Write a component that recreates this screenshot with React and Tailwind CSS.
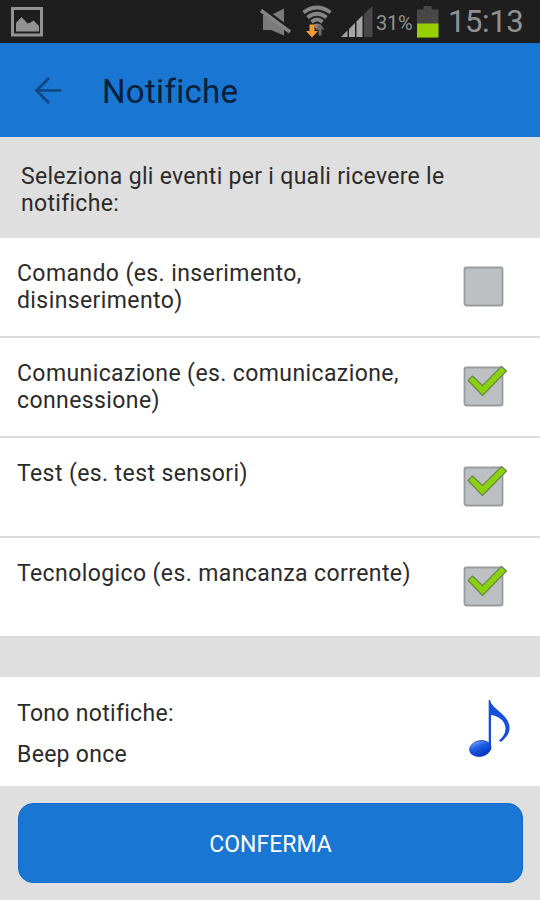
import React from "react";

const events = [
  { id: "comando", lines: ["Comando (es. inserimento,", "disinserimento)"], checked: false },
  { id: "comunicazione", lines: ["Comunicazione (es. comunicazione,", "connessione)"], checked: true },
  { id: "test", lines: ["Test (es. test sensori)"], checked: true },
  { id: "tecnologico", lines: ["Tecnologico (es. mancanza corrente)"], checked: true },
];

const StatusBar = () => (
  <div className="h-[43px] shrink-0 bg-[#1e1e1e] flex items-center text-[#929292]">
    <svg width="34" height="30" viewBox="0 0 34 30" className="ml-[11px]">
      <rect x="1.500" y="1.500" width="29" height="26.500" fill="none" stroke="#929292" strokeWidth="3" />
      <path d="M5 24.500V16l5.500-6 6 6.500 3-1 3-2 5.500 5.500v5.500z" fill="#929292" />
    </svg>
    {/* Muted speaker */}
    <svg width="32" height="30" viewBox="0 0 32 30" className="ml-[215px]">
      <path d="M3 8h8L24 1.500v27L11 23H3z" fill="#7b7b7b" />
      <path d="M2 2.500L31 24" stroke="#1e1e1e" strokeWidth="5.500" />
      <path d="M1 3.500L30 25" stroke="#858585" strokeWidth="3.600" />
    </svg>
    {/* Wifi with traffic arrows */}
    <svg width="30" height="34" viewBox="0 0 30 34" className="ml-[10px]">
      <g fill="none" stroke="#858585" strokeWidth="3.800">
        <path d="M1.500 7.500Q15 -2.500 28.500 7.500" />
        <path d="M5.500 12.500Q15 5 24.500 12.500" />
        <path d="M9.500 17Q15 12 20.500 17" />
      </g>
      <path d="M11 20Q15 17 19 20L15 25z" fill="#858585" />
      <path d="M18 18.500l4.500 6h-3v6h-3v-6h-3z" fill="#6b6b6b" />
      <path d="M7.500 19.500h5v6.500h3.500L10 32.500l-6-6.500h3.500z" fill="#f59a32" />
    </svg>
    {/* Signal */}
    <svg width="32" height="32" viewBox="0 0 32 32" className="ml-[9px]">
      <path d="M0 31l6.500-6.500V31z" fill="#a5a5a5" />
      <path d="M8 31v-8l6-6V31z" fill="#a5a5a5" />
      <path d="M15.500 31V15.500l6-6V31z" fill="#a5a5a5" />
      <path d="M23 31V8l8.500-8V31z" fill="#484848" />
    </svg>
    <span className="ml-[3px] mt-0.5 w-[37px] text-[20px] leading-none whitespace-nowrap tracking-[-0.2px]">31%</span>
    <svg width="22" height="32" viewBox="0 0 22 32" className="ml-[4px]">
      <path d="M6.500 0h8v3.500h7v28H0v-28h6.500z" fill="#484848" />
      <path d="M0 17.500h21.500v14H0z" fill="#97cf00" />
    </svg>
    <span className="ml-[9px] text-[31px] leading-none tracking-[-0.4px] whitespace-nowrap">15:13</span>
  </div>
);

const Header = () => (
  <header className="h-[94px] shrink-0 bg-[#1976d2] flex items-center pt-0.5">
    <svg width="28" height="28" viewBox="0 0 28 28" className="ml-[34px]" fill="none" stroke="#10467f" strokeWidth="2.700">
      <path d="M27.500 13.500H2M15 1L2.500 13.500 15 26" />
    </svg>
    <h1 className="ml-[40px] mt-px text-[33px] leading-10 tracking-[0.3px] text-[#07203a]">Notifiche</h1>
  </header>
);

const Checkbox = ({ checked }) => (
  <svg width="46" height="46" viewBox="0 0 46 46" className="ml-auto mr-[32px] mt-[25px] shrink-0">
    <rect x="2.500" y="4.500" width="38" height="38" rx="1.800" fill="#bdc0c2" stroke="#999c9e" strokeWidth="1.800" />
    {checked && (
      <path
        d="M6 17.500L10.500 13 20.500 22.500 39.500 3.500 44.500 8 20.500 32.500z"
        fill="#88d20e"
        stroke="#70864f"
        strokeWidth="1.200"
        strokeLinejoin="round"
      />
    )}
  </svg>
);

const EventRow = ({ event }) => (
  <label className="h-[100px] shrink-0 flex bg-white border-b-2 border-[#dcdcdc]">
    <span className="pl-[17px] pt-[22px] text-[23px] leading-[27px] tracking-[0.4px] whitespace-nowrap">
      {event.lines.map((line) => (
        <span key={line} className="block">{line}</span>
      ))}
    </span>
    <Checkbox checked={event.checked} />
  </label>
);

const MusicNote = () => (
  <svg width="44" height="60" viewBox="0 0 44 60" className="ml-auto mr-[28px] mt-[23px] shrink-0">
    <defs>
      <linearGradient id="note-head" x1="0" y1="0" x2="0.300" y2="1">
        <stop offset="0" stopColor="#8bb4f8" />
        <stop offset="0.450" stopColor="#1f5fe6" />
        <stop offset="1" stopColor="#0737c4" />
      </linearGradient>
    </defs>
    <path d="M22 0c2 10 19.500 14 19.500 28 0 6-4 10.500-9 14l-1.500-1.500c4-3.500 6.500-7 6.500-12 0-8-8-13-14.500-13.500v35h-2.300V0z" fill="#164fdc" />
    <ellipse cx="12.300" cy="48.500" rx="10.800" ry="7.800" transform="rotate(-12 12.300 48.500)" fill="url(#note-head)" stroke="#0b3dcb" strokeWidth="0.800" />
  </svg>
);

export default function App() {
  return (
    <div className="w-[540px] h-[900px] overflow-hidden flex flex-col bg-[#dfdfdf] font-[Roboto,sans-serif] text-[#2b2b2b]">
      <StatusBar />
      <Header />
      <p className="h-[101px] shrink-0 pl-[21px] pt-[26px] text-[23px] leading-[27px] tracking-[0.3px]">
        Seleziona gli eventi per i quali ricevere le
        <br />
        notifiche:
      </p>
      {events.map((event) => (
        <EventRow key={event.id} event={event} />
      ))}

      {/* Ringtone */}
      <div className="mt-[39px] h-[109px] shrink-0 flex bg-white">
        <div className="pl-[17px] pt-[23px] text-[23px] leading-[27px] tracking-[0.3px]">
          <p>Tono notifiche:</p>
          <p className="mt-[14px]">Beep once</p>
        </div>
        <MusicNote />
      </div>

      <div className="pt-[17px] pl-[18px] pr-[17px]">
        <button className="w-full h-[80px] rounded-[15px] bg-[#1976d2] border border-[#0f6bcb] text-white text-[23px] pt-1">
          CONFERMA
        </button>
      </div>
    </div>
  );
}
